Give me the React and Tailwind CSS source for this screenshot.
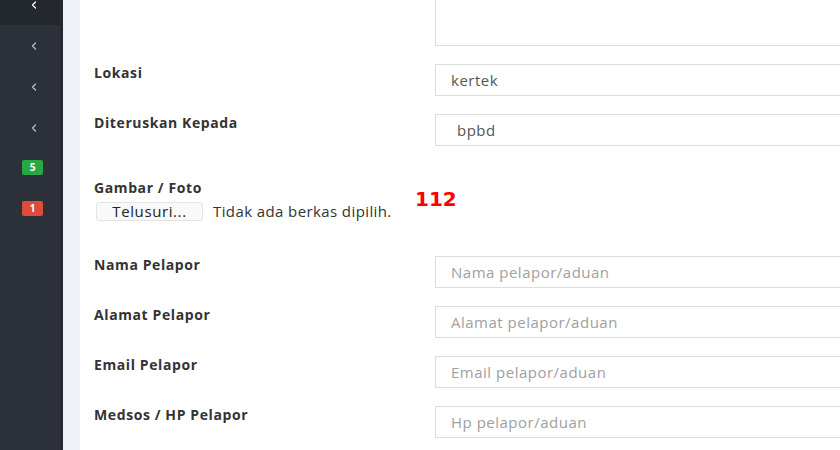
import { ChevronLeft } from "lucide-react";

const font = { fontFamily: '"Open Sans", "Noto Sans", sans-serif' };

function SideChevron({ top }) {
  return (
    <div className={`flex h-[41px] items-center justify-center pl-[8px] ${top ? "bg-[#23272e]" : ""}`}>
      <ChevronLeft size={12} strokeWidth={2.5} className={top ? "text-white" : "text-[#b8bec6]"} />
    </div>
  );
}

function Row({ label, children }) {
  return (
    <div className="mb-[18px] flex">
      <div className="w-[341px] shrink-0 text-[14px] font-bold leading-[18px] tracking-[0.6px] text-[#333]">
        {label}
      </div>
      {children}
    </div>
  );
}

function Field({ value, placeholder, pad = "pl-[15px]" }) {
  return (
    <div
      className={`flex h-[32px] w-[440px] shrink-0 items-center border border-[#dcdcdc] bg-white ${pad} text-[15px] tracking-[0.5px] ${
        value ? "text-[#555]" : "text-[#a0a0a0]"
      }`}
    >
      {value || placeholder}
    </div>
  );
}

export default function App() {
  return (
    <div className="flex h-[450px] w-[840px] overflow-hidden bg-white" style={font}>
      <aside className="flex w-[63px] shrink-0 border-r-[3px] border-[#262a30] bg-[#2c3139]">
        <div className="flex w-full flex-col -mt-[16px]">
          <SideChevron top />
          <SideChevron />
          <SideChevron />
          <SideChevron />
          <div className="mt-[12px] flex flex-col items-center gap-[26px] pl-[5px]">
            <span className="flex h-[15px] w-[21px] items-center justify-center rounded-[2px] bg-[#28a745] text-[10px] font-bold text-white">
              5
            </span>
            <span className="flex h-[15px] w-[21px] items-center justify-center rounded-[2px] bg-[#dd4b39] text-[10px] font-bold text-white">
              1
            </span>
          </div>
        </div>
      </aside>
      <div className="w-[17px] shrink-0 bg-[#eef1f8]" />
      <main className="flex-1 pl-[14px]">
        <div className="-mt-[30px] mb-[18px] flex">
          <div className="w-[341px] shrink-0" />
          <div className="h-[76px] w-[440px] shrink-0 border border-[#dcdcdc]" />
        </div>
        <Row label="Lokasi">
          <Field value="kertek" />
        </Row>
        <Row label="Diteruskan Kepada">
          <Field value="bpbd" pad="pl-[21px]" />
        </Row>
        <div className="flex pt-[15px]">
          <div className="w-[321px] shrink-0">
            <div className="text-[14px] font-bold leading-[18px] tracking-[0.6px] text-[#333]">Gambar / Foto</div>
            <div className="mt-[4px] flex h-[20px] items-center">
              <span className="ml-[2px] flex h-[19px] w-[107px] items-center justify-center rounded-[3px] border border-[#e3e3e3] bg-[#f9f9f9] text-[15px] leading-[19px] tracking-[0.6px] text-[#222]">
                Telusuri...
              </span>
              <span className="ml-[10px] text-[15px] leading-[20px] tracking-[0.4px] text-[#333]">
                Tidak ada berkas dipilih.
              </span>
            </div>
          </div>
          <div
            className="pt-[8px] text-[20px] font-bold leading-[24px] text-[#ff0000]"
            style={{ fontFamily: '"DejaVu Sans", sans-serif' }}
          >
            112
          </div>
        </div>
        <div className="mt-[35px]">
          <Row label="Nama Pelapor">
            <Field placeholder="Nama pelapor/aduan" />
          </Row>
          <Row label="Alamat Pelapor">
            <Field placeholder="Alamat pelapor/aduan" />
          </Row>
          <Row label="Email Pelapor">
            <Field placeholder="Email pelapor/aduan" />
          </Row>
          <Row label="Medsos / HP Pelapor">
            <Field placeholder="Hp pelapor/aduan" />
          </Row>
        </div>
      </main>
    </div>
  );
}
